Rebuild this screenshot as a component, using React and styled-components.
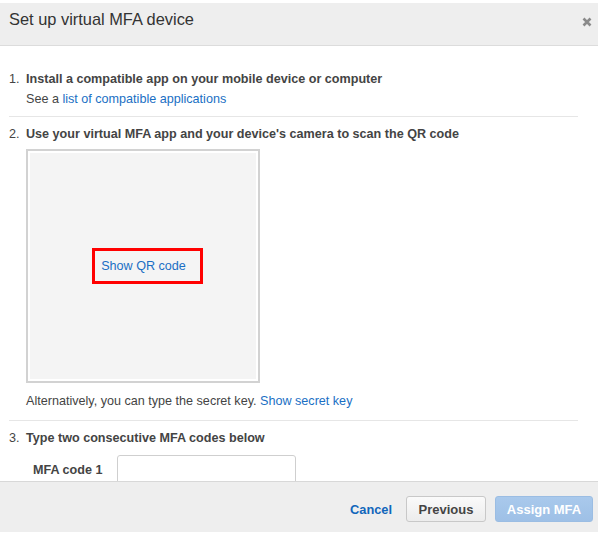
import styled, { createGlobalStyle } from "styled-components";

const Global = createGlobalStyle`
  body {
    margin: 0;
    background: #fff;
    font-family: "Liberation Sans", Arial, sans-serif;
    color: #444;
  }
`;

const Dialog = styled.div`
  width: 598px;
  height: 536px;
  padding-top: 3px;
  box-sizing: border-box;
  display: flex;
  flex-direction: column;
  overflow: hidden;
`;

const Header = styled.div`
  height: 43px;
  box-sizing: border-box;
  background: #eeeeee;
  border-bottom: 1px solid #dcdcdc;
  display: flex;
  align-items: flex-start;
  justify-content: space-between;
  padding: 6px 6px 0 9px;
`;

const Title = styled.h2`
  margin: 0;
  font-size: 16.4px;
  line-height: 20px;
  font-weight: normal;
  color: #333;
`;

const Close = styled.button`
  border: none;
  background: none;
  padding: 0;
  margin-top: 6px;
  width: 10px;
  height: 10px;
  cursor: pointer;
  color: #8a8a8a;
`;

const Body = styled.div`
  flex: 1;
  overflow: hidden;
  padding: 23px 20px 0 9px;
`;

const Step = styled.div`
  display: flex;
  font-size: 12.6px;
  line-height: 20px;
  padding-top: ${(p) => p.$top || 0}px;
  padding-bottom: ${(p) => p.$bottom || 0}px;
  border-bottom: ${(p) => (p.$last ? "none" : "1px solid #e6e6e6")};
`;

const Num = styled.div`
  width: 17px;
  flex-shrink: 0;
`;

const StepBody = styled.div`
  flex: 1;
`;

const StepTitle = styled.div`
  font-weight: bold;
  color: #444;
`;

const Link = styled.a`
  color: #1a6fc4;
  text-decoration: none;
  cursor: pointer;
`;

const QrBox = styled.div`
  margin-top: 5px;
  width: 234px;
  height: 234px;
  box-sizing: border-box;
  border: 2px solid #d2d2d2;
  padding: 2px;
  background: #fff;
`;

const QrInner = styled.div`
  width: 100%;
  height: 100%;
  background: #f4f4f4;
  display: flex;
  align-items: center;
  justify-content: center;
`;

const Highlight = styled.div`
  border: 3px solid #ff0000;
  padding: 5px 14px 5px 6px;
  margin-left: 9px;
  line-height: 20px;
`;

const Note = styled.div`
  margin-top: 8px;
`;

const CodeRow = styled.div`
  display: flex;
  align-items: center;
  margin-top: 7px;
  padding-left: 7px;
`;

const CodeLabel = styled.label`
  width: 84px;
  font-weight: bold;
  color: #444;
`;

const CodeInput = styled.input`
  width: 179px;
  height: 30px;
  box-sizing: border-box;
  border: 1px solid #cfcfcf;
  border-radius: 3px;
  outline: none;
`;

const Footer = styled.div`
  height: 51px;
  box-sizing: border-box;
  background: #eeeeee;
  border-top: 1px solid #d8d8d8;
  display: flex;
  align-items: center;
  justify-content: flex-end;
  padding: 4px 5px 0 0;
  margin-bottom: 4px;
`;

const CancelLink = styled.a`
  font-size: 12.8px;
  font-weight: bold;
  color: #1166bb;
  margin-right: 14px;
  cursor: pointer;
`;

const Button = styled.button`
  height: 26px;
  border-radius: 3px;
  font-family: inherit;
  font-size: 13px;
  font-weight: bold;
  padding: 0;
  width: ${(p) => p.$w}px;
  margin-left: ${(p) => p.$ml || 0}px;
  cursor: pointer;
  ${(p) =>
    p.$primary
      ? `
    background: linear-gradient(#a9c9ec, #9ec0e6);
    border: 1px solid #9bbde3;
    color: #fff;
  `
      : `
    background: linear-gradient(#fafafa, #ececec);
    border: 1px solid #c8c8c8;
    color: #444;
  `}
`;

const App = () => {
  return (
    <>
      <Global />
      <Dialog>
        <Header>
          <Title>Set up virtual MFA device</Title>
          <Close aria-label="Close">
            <svg width="10" height="10" viewBox="0 0 10 10">
              <path d="M1.5 1.5 L8.5 8.5 M8.5 1.5 L1.5 8.5" stroke="currentColor" strokeWidth="2.6" />
            </svg>
          </Close>
        </Header>
        <Body>
          <Step $bottom={7}>
            <Num>1.</Num>
            <StepBody>
              <StepTitle>Install a compatible app on your mobile device or computer</StepTitle>
              <div>
                See a <Link>list of compatible applications</Link>
              </div>
            </StepBody>
          </Step>
          <Step $top={7} $bottom={9}>
            <Num>2.</Num>
            <StepBody>
              <StepTitle>Use your virtual MFA app and your device's camera to scan the QR code</StepTitle>
              <QrBox>
                <QrInner>
                  <Highlight>
                    <Link>Show QR code</Link>
                  </Highlight>
                </QrInner>
              </QrBox>
              <Note>
                Alternatively, you can type the secret key. <Link>Show secret key</Link>
              </Note>
            </StepBody>
          </Step>
          <Step $top={7} $last>
            <Num>3.</Num>
            <StepBody>
              <StepTitle>Type two consecutive MFA codes below</StepTitle>
              <CodeRow>
                <CodeLabel>MFA code 1</CodeLabel>
                <CodeInput />
              </CodeRow>
            </StepBody>
          </Step>
        </Body>
        <Footer>
          <CancelLink>Cancel</CancelLink>
          <Button $w={80}>Previous</Button>
          <Button $w={98} $ml={9} $primary>
            Assign MFA
          </Button>
        </Footer>
      </Dialog>
    </>
  );
};

export default App;
